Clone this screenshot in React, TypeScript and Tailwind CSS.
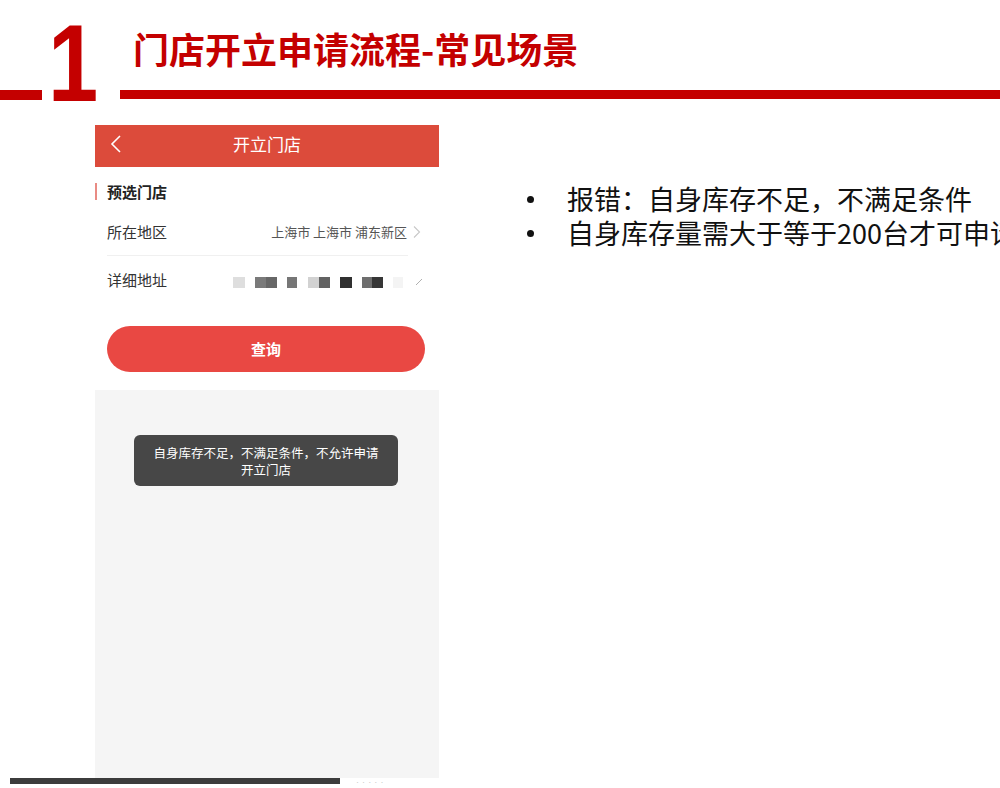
import React from 'react';

const blocks: { w: number; c: string; ml: number }[] = [
    { w: 12, c: '#dedede', ml: 0 },
    { w: 11, c: '#7a7a7a', ml: 10 },
    { w: 11, c: '#676767', ml: 0 },
    { w: 10, c: '#767676', ml: 10 },
    { w: 11, c: '#d2d2d2', ml: 11 },
    { w: 11, c: '#626262', ml: 0 },
    { w: 12, c: '#303030', ml: 10 },
    { w: 10, c: '#6e6e6e', ml: 10 },
    { w: 11, c: '#363636', ml: 0 },
    { w: 10, c: '#f4f4f4', ml: 10 },
];

const PhoneScreen: React.FC = () => {
    return (
        <div className="ml-[95px] w-[344px] flex flex-col">
            {/* nav bar */}
            <div className="h-[42px] bg-[#dc4b3b] flex items-center relative">
                <svg className="absolute left-[14px] top-[9px]" width="16" height="20" viewBox="0 0 16 20">
                    <path d="M11 2 L3 10 L11 18" fill="none" stroke="#fff" strokeWidth="1.6" />
                </svg>
                <div className="flex-1 text-center text-white text-[17px] leading-none -mt-[5px]">开立门店</div>
            </div>

            <div className="bg-white flex flex-col">
                <div className="mt-[16px] h-[17px] flex items-center">
                    <div className="w-[2px] h-[17px] bg-[#e98b84]" />
                    <div className="ml-[10px] text-[15px] font-bold text-[#222] leading-none -mt-[1px]">预选门店</div>
                </div>

                <div className="mt-[8px] ml-[12px] mr-[31px] h-[48px] flex items-center border-b border-[#f0f0f0]">
                    <div className="text-[15px] text-[#333] leading-none -mt-[1px]">所在地区</div>
                    <div className="ml-auto text-[13px] text-[#555] leading-none mr-[2px]">上海市 上海市 浦东新区</div>
                    <svg className="ml-[3px] -mr-[14px]" width="10" height="14" viewBox="0 0 10 14">
                        <path d="M2 1.5 L7.5 7 L2 12.5" fill="none" stroke="#c8c8c8" strokeWidth="1.1" />
                    </svg>
                </div>

                <div className="ml-[12px] h-[48px] flex items-center">
                    <div className="text-[15px] text-[#333] leading-none -mt-[2px]">详细地址</div>
                    <div className="ml-[66px] mt-[4px] flex items-center blur-[0.6px]">
                        {blocks.map((b, i) => (
                            <div key={i} className="h-[11px]" style={{ width: b.w, marginLeft: b.ml, backgroundColor: b.c }} />
                        ))}
                        <svg className="ml-[12px]" width="8" height="8" viewBox="0 0 8 8">
                            <path d="M1 7 L7 1" stroke="#b0b0b0" strokeWidth="1" />
                        </svg>
                    </div>
                </div>

                <div className="mt-[22px] ml-[12px] mr-[14px] h-[46px] rounded-full bg-[#e94843] flex items-center justify-center">
                    <span className="text-white text-[15px] font-bold leading-none -mt-[2px]">查询</span>
                </div>
                <div className="h-[18px]" />
            </div>

            <div className="flex-1 bg-[#f5f5f5] flex flex-col items-center">
                <div className="mt-[45px] -ml-[2px] w-[264px] h-[51px] rounded-[6px] bg-[#474747] flex flex-col items-center justify-center text-white text-[12.5px] leading-[17px]">
                    <span>自身库存不足，不满足条件，不允许申请</span>
                    <span>开立门店</span>
                </div>
            </div>
        </div>
    );
};

const App: React.FC = () => {
    return (
        <div className="w-[1000px] h-[788px] overflow-hidden bg-white flex flex-col font-['Noto_Sans_CJK_SC','Noto_Sans',sans-serif]">
            {/* page title */}
            <div className="h-[125px] flex shrink-0">
                <div className="w-[42px] h-[10px] mt-[90px] bg-[#c40000]" />
                <div className="w-[78px] mt-[8px] text-[110px] leading-none font-bold text-[#c40000] font-['Liberation_Sans',sans-serif]">
                    <span className="inline-block scale-x-[0.82] origin-left ml-[6px]">1</span>
                </div>
                <div className="flex-1 flex flex-col">
                    <div className="mt-[26px] ml-[13px] h-[50px] text-[36px] leading-[44px] font-bold text-[#c40000] whitespace-nowrap">
                        门店开立申请流程-常见场景
                    </div>
                    <div className="mt-[14px] h-[9px] bg-[#c40000]" />
                </div>
            </div>

            <div className="flex h-[653px] shrink-0">
                <PhoneScreen />
                <div className="ml-[88px] mt-[57px] flex-1 flex flex-col text-[27px] leading-[34px] text-[#111] whitespace-nowrap overflow-hidden">
                    <div className="flex items-center">
                        <span className="shrink-0 w-[7px] h-[7px] rounded-full bg-[#111] mr-[33px]" />
                        <span className="shrink-0">报错：自身库存不足，不满足条件</span>
                    </div>
                    <div className="flex items-center">
                        <span className="shrink-0 w-[7px] h-[7px] rounded-full bg-[#111] mr-[33px]" />
                        <span className="shrink-0">自身库存量需大于等于200台才可申请</span>
                    </div>
                </div>
            </div>

            <div className="flex items-center h-[6px] shrink-0">
                <div className="ml-[10px] w-[330px] h-[6px] bg-[#3c3c3c]" />
                <div className="ml-[15px] text-[5px] leading-none text-[#ccc]">&middot; &middot; &middot; &middot; &middot;</div>
            </div>
        </div>
    );
};

export default App;
